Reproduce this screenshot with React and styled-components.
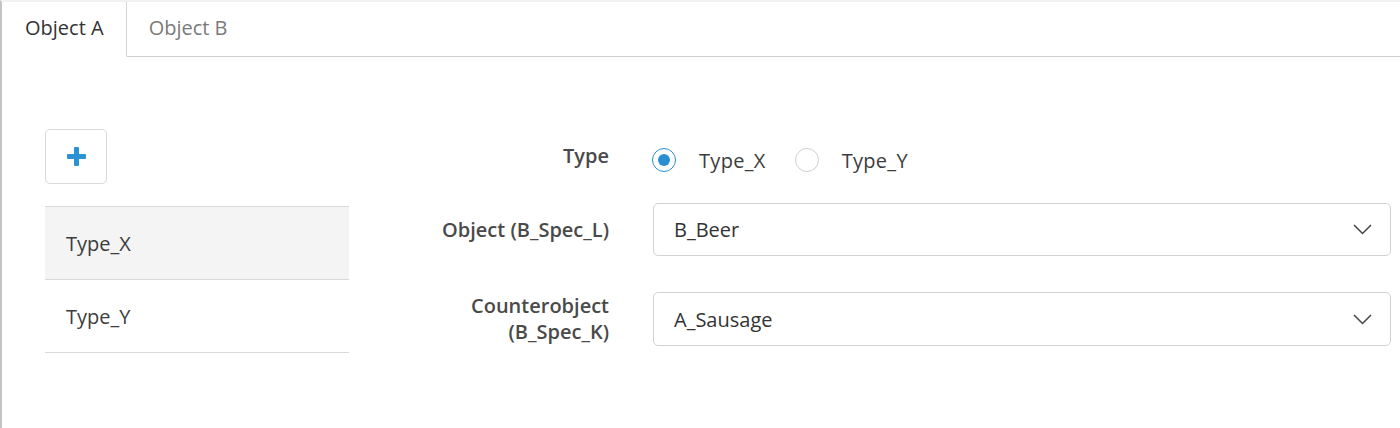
import React, { useState } from 'react'
import styled, { createGlobalStyle } from 'styled-components'

const GlobalStyle = createGlobalStyle`
    html, body {
        margin: 0;
        padding: 0;
        background: #ffffff;
    }
    body {
        font-family: "Open Sans", "Noto Sans", sans-serif;
        color: #333333;
    }
`

const Page = styled.div`
    min-height: 428px;
    border-left: 2px solid #c4c4c4;
    padding-left: 1px;
    border-top: 2px solid #f1f1f1;
    box-sizing: border-box;
`

const TabBar = styled.div`
    display: flex;
    height: 55px;
`

const Tab = styled.div`
    display: flex;
    align-items: center;
    padding: 0 22px 3px;
    font-size: 20px;
    color: ${p => (p.$active ? '#333333' : '#7a7a7a')};
    border-right: ${p => (p.$active ? '1px solid #d6d6d6' : 'none')};
    border-bottom: ${p => (p.$active ? '1px solid transparent' : '1px solid #cfcfcf')};
    cursor: pointer;
`

const TabFill = styled.div`
    flex: 1;
    border-bottom: 1px solid #cfcfcf;
`

const Content = styled.div`
    display: flex;
    padding: 72px 9px 0 42px;
`

const Sidebar = styled.div`
    width: 304px;
    flex-shrink: 0;
`

const AddButton = styled.button`
    width: 62px;
    height: 55px;
    display: flex;
    align-items: center;
    justify-content: center;
    background: #fff;
    border: 1px solid #d9d9d9;
    border-radius: 5px;
    padding: 0;
    margin-bottom: 22px;
    cursor: pointer;
`

const List = styled.div`
    border-top: 1px solid #d9d9d9;
`

const ListItem = styled.div`
    height: 72px;
    display: flex;
    align-items: center;
    padding-left: 21px;
    font-size: 20px;
    color: #3d3d3d;
    background: ${p => (p.$selected ? '#f4f4f4' : '#ffffff')};
    border-bottom: 1px solid #d9d9d9;
`

const Form = styled.div`
    flex: 1;
    padding-top: 11px;
`

const Row = styled.div`
    display: flex;
    align-items: center;
    height: ${p => p.$height}px;
    margin-bottom: ${p => p.$gap || 0}px;
`

const Label = styled.div`
    width: 260px;
    flex-shrink: 0;
    margin-right: 44px;
    text-align: right;
    font-size: 20px;
    font-weight: 600;
    line-height: 26px;
    color: #4a4a4a;
    margin-top: ${p => p.$shift || 0}px;
`

const RadioGroup = styled.div`
    display: flex;
    align-items: center;
`

const RadioOption = styled.label`
    display: flex;
    align-items: center;
    font-size: 20px;
    letter-spacing: 0.3px;
    color: #3d3d3d;
    margin-right: 30px;
    cursor: pointer;
`

const RadioCircle = styled.span`
    width: 24px;
    height: 24px;
    box-sizing: border-box;
    border-radius: 50%;
    border: 1px solid ${p => (p.$checked ? '#2a8fd0' : '#cfcfcf')};
    display: flex;
    align-items: center;
    justify-content: center;
    margin-right: 23px;
    margin-left: -1px;

    &::after {
        content: '';
        width: 12px;
        height: 12px;
        border-radius: 50%;
        background: ${p => (p.$checked ? '#2a8fd0' : 'transparent')};
    }
`

const Select = styled.div`
    flex: 1;
    height: 100%;
    box-sizing: border-box;
    border: 1px solid #d2d2d2;
    border-radius: 5px;
    display: flex;
    align-items: center;
    justify-content: space-between;
    padding: 0 18px 0 20px;
    font-size: 20px;
    color: #333333;
    cursor: pointer;
`

const PlusIcon = () => (
    <svg width="19" height="19" viewBox="0 0 19 19">
        <rect x="7" y="0" width="5" height="19" rx="1" fill="#2b93d3" />
        <rect x="0" y="7" width="19" height="5" rx="1" fill="#2b93d3" />
    </svg>
)

const Chevron = () => (
    <svg width="19" height="11" viewBox="0 0 19 11">
        <polyline points="1,1 9.5,9.5 18,1" fill="none" stroke="#444" strokeWidth="1.5" />
    </svg>
)

export default function App() {
    const [tab, setTab] = useState('A')
    const [type, setType] = useState('X')

    return (
        <>
            <GlobalStyle />
            <Page>
                <TabBar>
                    <Tab $active={tab === 'A'} onClick={() => setTab('A')}>Object A</Tab>
                    <Tab $active={tab === 'B'} onClick={() => setTab('B')}>Object B</Tab>
                    <TabFill />
                </TabBar>
                <Content>
                    <Sidebar>
                        <AddButton><PlusIcon /></AddButton>
                        <List>
                            <ListItem $selected>Type_X</ListItem>
                            <ListItem>Type_Y</ListItem>
                        </List>
                    </Sidebar>
                    <Form>
                        <Row $height={40} $gap={23}>
                            <Label $shift={-8}>Type</Label>
                            <RadioGroup>
                                <RadioOption onClick={() => setType('X')}>
                                    <RadioCircle $checked={type === 'X'} />
                                    Type_X
                                </RadioOption>
                                <RadioOption onClick={() => setType('Y')}>
                                    <RadioCircle $checked={type === 'Y'} />
                                    Type_Y
                                </RadioOption>
                            </RadioGroup>
                        </Row>
                        <Row $height={53} $gap={36}>
                            <Label>Object (B_Spec_L)</Label>
                            <Select>B_Beer<Chevron /></Select>
                        </Row>
                        <Row $height={54}>
                            <Label>Counterobject<br />(B_Spec_K)</Label>
                            <Select>A_Sausage<Chevron /></Select>
                        </Row>
                    </Form>
                </Content>
            </Page>
        </>
    )
}
